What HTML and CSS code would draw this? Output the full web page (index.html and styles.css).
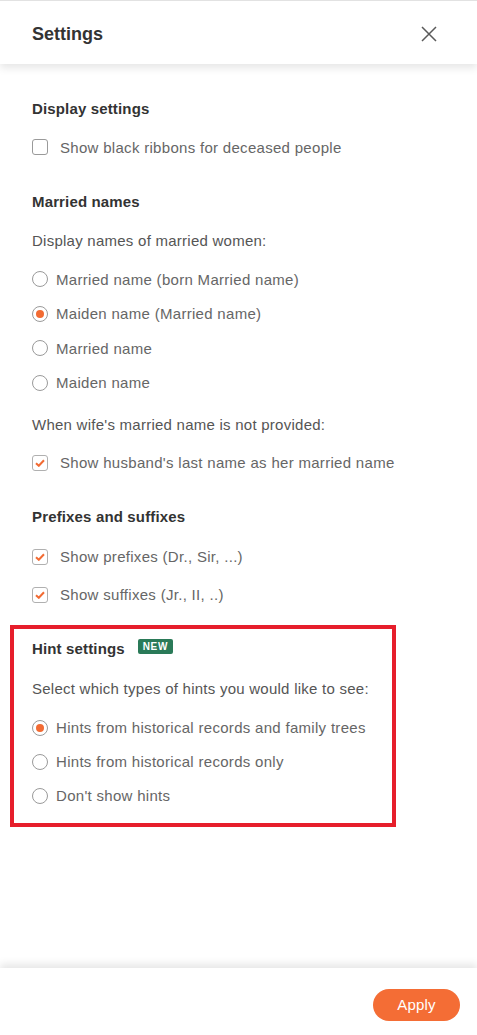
FILE: index.html
```html
<!DOCTYPE html>
<html lang="en">
<head>
<meta charset="utf-8">
<title>Settings</title>
<link rel="stylesheet" href="styles.css">
</head>
<body>
<div class="panel">
  <header class="header">
    <h1 class="title">Settings</h1>
    <button class="close" aria-label="Close">
      <svg width="16" height="16" viewBox="0 0 16 16"><path d="M1 1L15 15M15 1L1 15" stroke="#5a5a5a" stroke-width="1.5" fill="none"/></svg>
    </button>
  </header>

  <main class="content">
    <section class="sec sec-display">
      <h2 class="heading">Display settings</h2>
      <label class="row check-row"><span class="cb"></span><span class="lbl">Show black ribbons for deceased people</span></label>
    </section>

    <section class="sec sec-married">
      <h2 class="heading">Married names</h2>
      <p class="para">Display names of married women:</p>
      <div class="radios">
        <label class="row radio-row"><span class="rb"></span><span class="lbl">Married name (born Married name)</span></label>
        <label class="row radio-row"><span class="rb on"></span><span class="lbl">Maiden name (Married name)</span></label>
        <label class="row radio-row"><span class="rb"></span><span class="lbl">Married name</span></label>
        <label class="row radio-row"><span class="rb"></span><span class="lbl">Maiden name</span></label>
      </div>
      <p class="para para-2">When wife's married name is not provided:</p>
      <label class="row check-row after-para"><span class="cb on"><svg width="10" height="8" viewBox="0 0 10 8"><path d="M1 4.2L3.8 6.8L9 1.2" stroke="#f26b33" stroke-width="2" fill="none"/></svg></span><span class="lbl">Show husband's last name as her married name</span></label>
    </section>

    <section class="sec sec-prefix">
      <h2 class="heading">Prefixes and suffixes</h2>
      <div class="checks">
        <label class="row check-row"><span class="cb on"><svg width="10" height="8" viewBox="0 0 10 8"><path d="M1 4.2L3.8 6.8L9 1.2" stroke="#f26b33" stroke-width="2" fill="none"/></svg></span><span class="lbl">Show prefixes (Dr., Sir, ...)</span></label>
        <label class="row check-row"><span class="cb on"><svg width="10" height="8" viewBox="0 0 10 8"><path d="M1 4.2L3.8 6.8L9 1.2" stroke="#f26b33" stroke-width="2" fill="none"/></svg></span><span class="lbl">Show suffixes (Jr., II, ..)</span></label>
      </div>
    </section>

    <section class="sec sec-hint">
      <h2 class="heading heading-hint">Hint settings <span class="badge">NEW</span></h2>
      <p class="para para-hint">Select which types of hints you would like to see:</p>
      <div class="radios radios-hint">
        <label class="row radio-row"><span class="rb on"></span><span class="lbl">Hints from historical records and family trees</span></label>
        <label class="row radio-row"><span class="rb"></span><span class="lbl">Hints from historical records only</span></label>
        <label class="row radio-row"><span class="rb"></span><span class="lbl">Don't show hints</span></label>
      </div>
    </section>
  </main>

  <footer class="footer">
    <button class="apply">Apply</button>
  </footer>
</div>
</body>
</html>
```

FILE: styles.css
```css
* { box-sizing: border-box; }
html, body { margin: 0; padding: 0; background: #fff; }
body {
  font-family: "Liberation Sans", Arial, sans-serif;
  color: #666;
}
.panel {
  height: 1035px;
  display: flex;
  flex-direction: column;
  overflow: hidden;
  border-top: 1px solid #e2e2e2;
}
.header {
  height: 63px;
  flex: none;
  display: flex;
  align-items: center;
  justify-content: space-between;
  padding: 0 40px 0 32px;
  position: relative;
  z-index: 2;
  background: #fff;
  box-shadow: 0 4px 8px rgba(0,0,0,0.10);
}
.title {
  margin: 0;
  font-size: 18px;
  font-weight: bold;
  color: #333;
  line-height: 22px;
  padding-top: 2px;
}
.close {
  border: 0;
  background: none;
  padding: 0;
  width: 16px;
  height: 16px;
  display: flex;
  margin-top: 2px;
}
.content {
  flex: 1;
  padding-top: 34px;
}
.sec { padding-left: 32px; }
.heading {
  margin: 0;
  padding-top: 1px;
  font-size: 15px;
  line-height: 20px;
  font-weight: bold;
  color: #333;
  letter-spacing: 0.15px;
  display: flex;
  align-items: center;
}
.para {
  margin: 19px 0 0;
  font-size: 15px;
  line-height: 20px;
  color: #555;
  letter-spacing: 0.25px;
}
.para-2 { margin-top: 22px; }
.para-hint { margin-top: 20px; }
.row {
  display: flex;
  align-items: center;
  height: 20px;
  font-size: 15px;
  letter-spacing: 0.3px;
}
.lbl { color: #666; white-space: nowrap; }
.sec-display .check-row { margin-top: 18px; }
.sec-married { margin-top: 34px; }
.sec-prefix { margin-top: 33px; }
.after-para { margin-top: 18px; }
.radios {
  display: flex;
  flex-direction: column;
  gap: 14.5px;
  margin-top: 18px;
}
.radios-hint { margin-top: 19px; gap: 14px; }
.checks {
  display: flex;
  flex-direction: column;
  gap: 18px;
  margin-top: 20px;
}
.cb {
  width: 16px;
  height: 16px;
  border: 1px solid #9a9a9a;
  border-radius: 3px;
  margin-right: 12px;
  display: flex;
  align-items: center;
  justify-content: center;
  flex: none;
}
.cb.on { border-color: #b0b0b0; }
.rb {
  width: 16px;
  height: 16px;
  border: 1px solid #9a9a9a;
  border-radius: 50%;
  margin-right: 8px;
  display: flex;
  align-items: center;
  justify-content: center;
  flex: none;
}
.rb.on::after {
  content: "";
  width: 8px;
  height: 8px;
  border-radius: 50%;
  background: #f26b33;
}
.sec-hint {
  margin: 20px 0 0 10px;
  width: 386px;
  border: 4px solid #e61e2b;
  padding: 9px 0 17px 18px;
}
.badge {
  margin-left: 13px;
  background: #2a7a58;
  color: #fff;
  font-size: 10px;
  font-weight: bold;
  letter-spacing: 0.6px;
  line-height: 15px;
  height: 15px;
  padding: 0 5px;
  border-radius: 2px;
  position: relative;
  top: -2px;
}
.footer {
  flex: none;
  height: 67px;
  display: flex;
  justify-content: flex-end;
  align-items: flex-start;
  padding: 21px 17px 0 0;
  background: #fff;
  box-shadow: 0 -4px 8px rgba(0,0,0,0.10);
  position: relative;
  z-index: 2;
}
.apply {
  width: 87px;
  height: 32px;
  border: 0;
  border-radius: 16px;
  background: #f46d35;
  color: #fff;
  font-family: "Liberation Sans", Arial, sans-serif;
  font-size: 15px;
  padding: 0 0 1px;
  letter-spacing: 0.2px;
}
```
